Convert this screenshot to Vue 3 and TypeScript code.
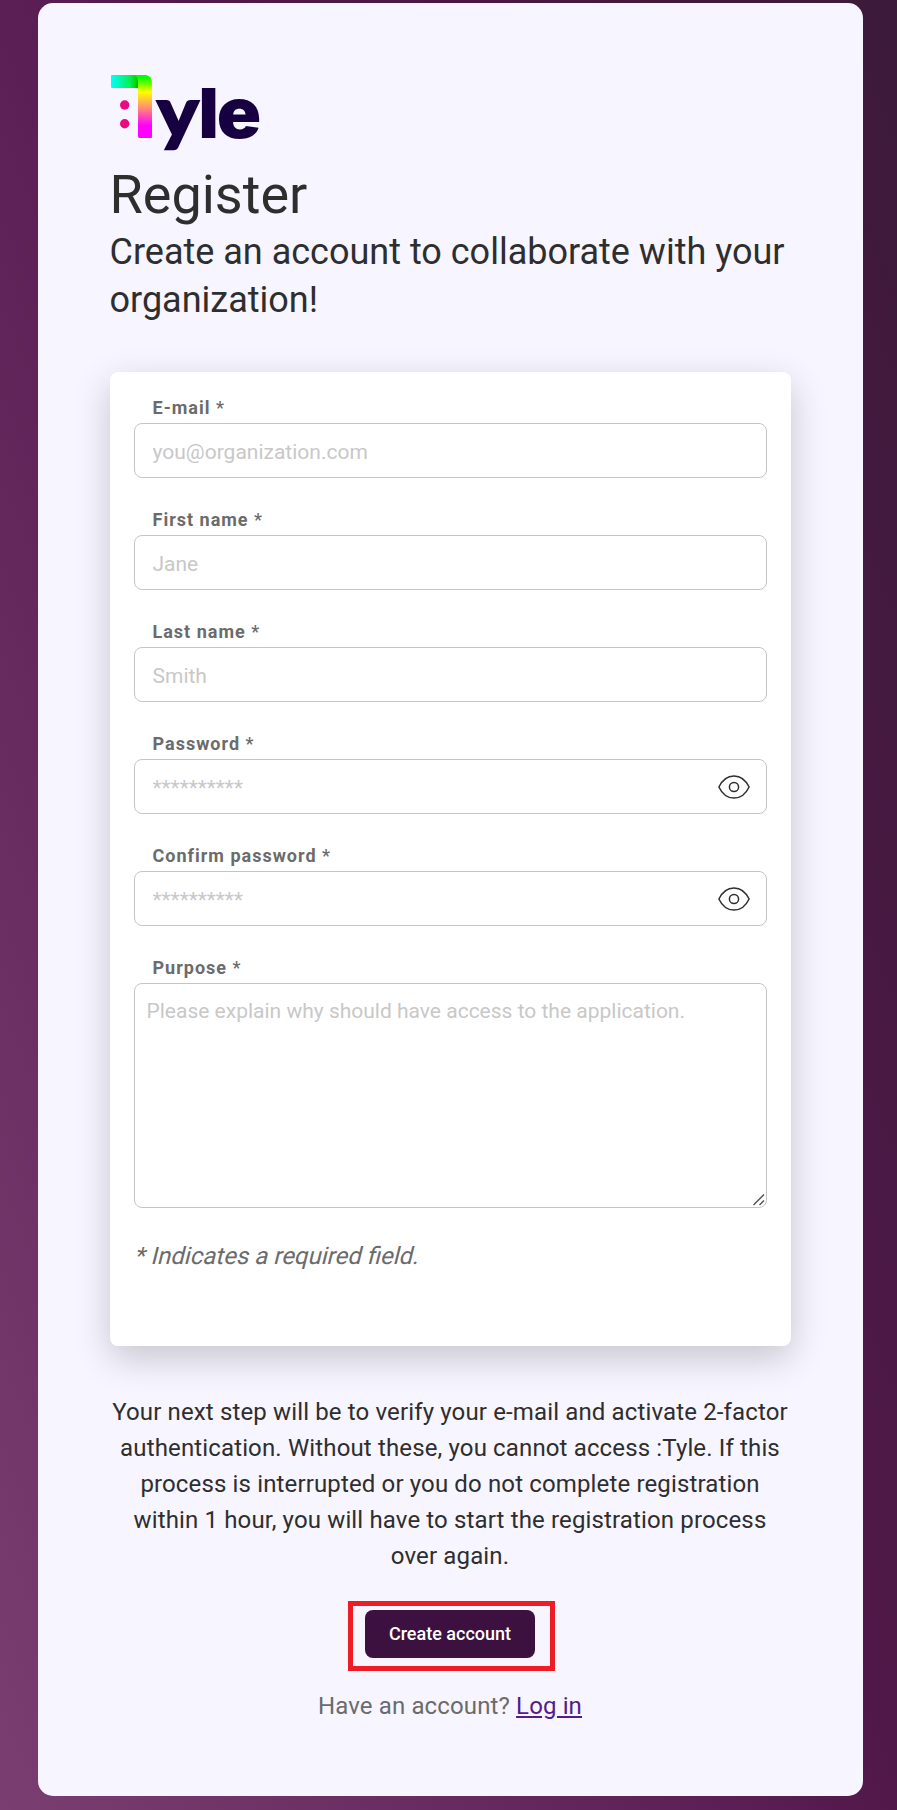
<script setup lang="ts">
import { ref } from 'vue'

interface Field {
  id: string
  label: string
  placeholder: string
  secret?: boolean
}

const fields: Field[] = [
  { id: 'email', label: 'E-mail', placeholder: 'you@organization.com' },
  { id: 'first', label: 'First name', placeholder: 'Jane' },
  { id: 'last', label: 'Last name', placeholder: 'Smith' },
  { id: 'password', label: 'Password', placeholder: '**********', secret: true },
  { id: 'confirm', label: 'Confirm password', placeholder: '**********', secret: true },
]

const values = ref<Record<string, string>>({})
const visible = ref<Record<string, boolean>>({})
const purpose = ref('')

function inputType(field: Field): string {
  return field.secret && !visible.value[field.id] ? 'password' : 'text'
}
</script>

<template>
  <div class="page">
    <main class="panel">
      <svg class="logo" width="150" height="76" viewBox="0 0 150 76" aria-label=":Tyle">
        <defs>
          <linearGradient id="bar" x1="0" y1="0" x2="1" y2="0">
            <stop offset="0" stop-color="#00ffff" />
            <stop offset="0.6" stop-color="#00f050" />
            <stop offset="0.75" stop-color="#00d810" />
            <stop offset="0.88" stop-color="#00a000" />
          </linearGradient>
          <linearGradient id="stem" x1="0" y1="0" x2="0" y2="1">
            <stop offset="0.04" stop-color="#00ff00" />
            <stop offset="0.27" stop-color="#ffff00" />
            <stop offset="0.55" stop-color="#ff8080" />
            <stop offset="0.8" stop-color="#ff00ff" />
          </linearGradient>
        </defs>
        <path d="M2 0H33V17.500Q31 13 25 13H2Q1 13 1 12V1Q1 0 2 0Z" fill="url(#bar)" />
        <path d="M24 0H36Q42 1 42 8V62Q42 63 41 63H29.500Q28 63 28 61V6Q27 1 24 0Z" fill="url(#stem)" />
        <circle cx="14.700" cy="30" r="4.700" fill="#ea0a82" />
        <circle cx="14.700" cy="48.700" r="4.700" fill="#ea0a82" />
        <g fill="#170041" font-weight="900">
          <text
            x="47"
            y="61.800"
            font-family="Lato"
            font-size="70.500"
            textLength="41.500"
            lengthAdjust="spacingAndGlyphs"
            stroke="#170041"
            stroke-width="2"
          >y</text>
          <text x="88.500" y="63" font-family="Inter" font-size="68.500">l</text>
          <text
            x="106.700"
            y="63"
            font-family="Inter"
            font-size="70"
            textLength="44.500"
            lengthAdjust="spacingAndGlyphs"
          >e</text>
        </g>
      </svg>

      <h1 class="title">Register</h1>
      <p class="subtitle">Create an account to collaborate with your organization!</p>

      <form class="form" @submit.prevent>
        <div v-for="field in fields" :key="field.id" class="field">
          <label class="label" :for="field.id">{{ field.label }} <span class="star">*</span></label>
          <div class="box">
            <input
              :id="field.id"
              v-model="values[field.id]"
              class="input"
              :type="inputType(field)"
              :placeholder="field.placeholder"
            />
            <button
              v-if="field.secret"
              type="button"
              class="eye"
              aria-label="Toggle password visibility"
              @click="visible[field.id] = !visible[field.id]"
            >
              <svg width="32" height="24" viewBox="0 0 32 24" fill="none" stroke="#2e2e2e" stroke-width="1.500">
                <path d="M0.900 12C4.200 5 9.800 0.900 16 0.900S27.800 5 31.100 12C27.800 19 22.200 23.100 16 23.100S4.200 19 0.900 12Z" />
                <circle cx="16" cy="12" r="4.600" />
              </svg>
            </button>
          </div>
        </div>
        <div class="field">
          <label class="label" for="purpose">Purpose <span class="star">*</span></label>
          <div class="area">
            <textarea
              id="purpose"
              v-model="purpose"
              class="textarea"
              placeholder="Please explain why should have access to the application."
            ></textarea>
            <svg class="grip" width="12" height="12" viewBox="0 0 12 12" stroke="#555" stroke-width="1.500">
              <path d="M0.500 11L11 0.500M6.500 11L11 6.500" />
            </svg>
          </div>
        </div>
        <p class="note">* Indicates a required field.</p>
      </form>

      <p class="info">
        Your next step will be to verify your e-mail and activate 2-factor authentication. Without these, you cannot
        access :Tyle. If this process is interrupted or you do not complete registration within 1 hour, you will have to
        start the registration process over again.
      </p>

      <div class="action">
        <button type="button" class="submit">Create account</button>
        <span class="highlight"></span>
      </div>
      <p class="login">Have an account? <a href="#">Log in</a></p>
    </main>
  </div>
</template>

<style>
body {
  margin: 0;
}
</style>

<style scoped>
.page {
  box-sizing: border-box;
  height: 1810px;
  padding: 3px 34px 14px 38px;
  background: linear-gradient(68deg, #7b3e70 0%, #5b1f55 45%, #511849 55%, #3c1a3a 100%);
  font-family: Roboto, sans-serif;
  color: #2e2e2e;
}

.panel {
  box-sizing: border-box;
  display: flex;
  flex-direction: column;
  height: 1793px;
  padding: 72px;
  border-radius: 15px;
  background: #f7f5ff;
}

.logo {
  display: block;
  flex: none;
  overflow: visible;
}

.title {
  margin: 10px 0 0 -0.5px;
  font-size: 54px;
  font-weight: 400;
  line-height: 68px;
}

.subtitle {
  margin: -1px 0 0 -0.5px;
  font-size: 36px;
  line-height: 48px;
}

.form {
  box-sizing: border-box;
  height: 974px;
  margin-top: 48px;
  padding: 24px;
  border-radius: 8px;
  background: #fff;
  box-shadow: 0 12px 36px rgba(0, 0, 0, 0.2);
}

.field {
  display: flex;
  flex-direction: column;
  gap: 3px;
  margin-bottom: 30px;
}

.label {
  padding-left: 18.5px;
  font-size: 18px;
  font-weight: 700;
  line-height: 24px;
  letter-spacing: 1px;
  color: #6b6b6b;
}

.star {
  font-weight: 500;
}

.box {
  box-sizing: border-box;
  display: flex;
  align-items: center;
  height: 55px;
  padding: 0 16px 0 17.5px;
  border: 1px solid #c4c4c4;
  border-radius: 8px;
}

.input {
  flex: 1;
  min-width: 0;
  padding: 3px 0 0;
  border: 0;
  outline: 0;
  background: transparent;
  font: 21px / 27px Roboto, sans-serif;
}

.input::placeholder,
.textarea::placeholder {
  color: #c8c8c8;
  opacity: 1;
}

.eye {
  display: flex;
  padding: 0;
  border: 0;
  background: none;
}

.area {
  position: relative;
}

.textarea {
  box-sizing: border-box;
  display: block;
  width: 100%;
  height: 225px;
  padding: 12px 12px 12px 11.5px;
  border: 1px solid #c4c4c4;
  border-radius: 8px;
  outline: 0;
  resize: none;
  font: 21px / 30px Roboto, sans-serif;
}

.grip {
  position: absolute;
  right: 2px;
  bottom: 2px;
  fill: none;
}

.note {
  margin: 0 0 0 -0.5px;
  font-size: 24px;
  line-height: 36px;
  color: #6b6b6b;
  transform: skewX(-14deg);
  transform-origin: 0 26px;
}

.info {
  margin: 48px 1px 0 0;
  font-size: 24px;
  line-height: 36px;
  letter-spacing: 0.14px;
  text-align: center;
}

.action {
  position: relative;
  align-self: center;
  margin: 36px 1px 0 0;
}

.submit {
  display: block;
  width: 170px;
  height: 48px;
  padding: 0;
  border: 0;
  border-radius: 8px;
  background: #3d113f;
  color: #fff;
  font: 500 18px / 24px Roboto, sans-serif;
}

.highlight {
  position: absolute;
  inset: -9px -20px -13px -17px;
  border: 5px solid #ee1c25;
  pointer-events: none;
}

.login {
  margin: 30px 1px 0 0;
  font-size: 24px;
  line-height: 36px;
  letter-spacing: 0.13px;
  text-align: center;
  color: #6b6b6b;
}

.login a {
  color: #551a8b;
}
</style>
